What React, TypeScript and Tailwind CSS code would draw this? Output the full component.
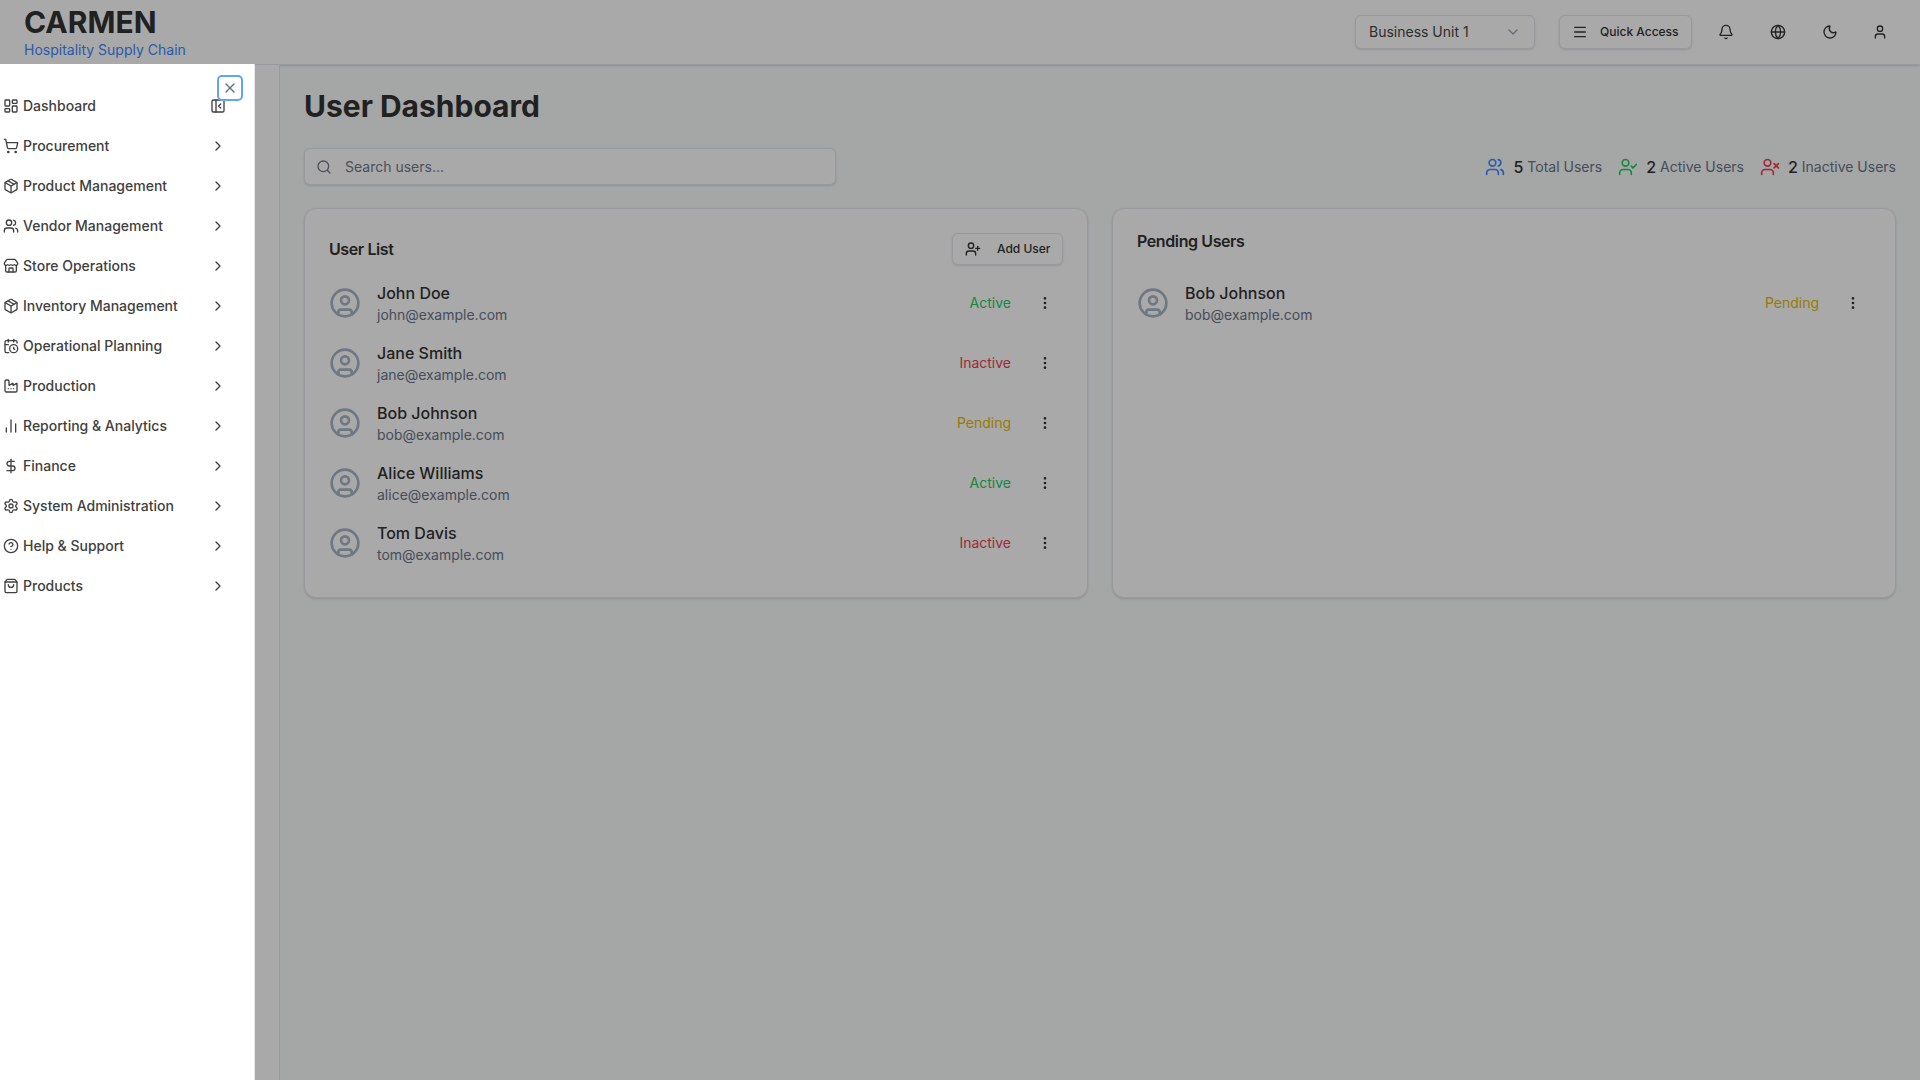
import {
  BarChart2,
  Bell,
  CalendarClock,
  ChevronDown,
  ChevronRight,
  CircleHelp,
  CircleUser,
  DollarSign,
  EllipsisVertical,
  Factory,
  Globe,
  LayoutDashboard,
  Menu,
  Moon,
  Package,
  PanelLeftClose,
  Search,
  Settings,
  ShoppingBag,
  ShoppingCart,
  Store,
  User,
  UserCheck,
  UserPlus,
  UserX,
  Users,
  X,
} from 'lucide-react';

const navItems = [
  { label: 'Dashboard', icon: LayoutDashboard },
  { label: 'Procurement', icon: ShoppingCart },
  { label: 'Product Management', icon: Package },
  { label: 'Vendor Management', icon: Users },
  { label: 'Store Operations', icon: Store },
  { label: 'Inventory Management', icon: Package },
  { label: 'Operational Planning', icon: CalendarClock },
  { label: 'Production', icon: Factory },
  { label: 'Reporting & Analytics', icon: BarChart2 },
  { label: 'Finance', icon: DollarSign },
  { label: 'System Administration', icon: Settings },
  { label: 'Help & Support', icon: CircleHelp },
  { label: 'Products', icon: ShoppingBag },
];

const users = [
  { name: 'John Doe', email: 'john@example.com', status: 'Active' },
  { name: 'Jane Smith', email: 'jane@example.com', status: 'Inactive' },
  { name: 'Bob Johnson', email: 'bob@example.com', status: 'Pending' },
  { name: 'Alice Williams', email: 'alice@example.com', status: 'Active' },
  { name: 'Tom Davis', email: 'tom@example.com', status: 'Inactive' },
];

// colours are lifted so they read right once the backdrop dims them
function statusClass(status: string) {
  if (status === 'Active') return 'text-[#20cc60]';
  if (status === 'Inactive') return 'text-[#f04050]';
  return 'text-[#e8b800]';
}

function UserRow({ name, email, status }: { name: string; email: string; status: string }) {
  return (
    <div className="flex h-[60px] items-center justify-between">
      <div className="flex items-center gap-4">
        <CircleUser className="h-8 w-8 text-[#a8b4c4]" strokeWidth={2} />
        <div>
          <p className="text-base font-medium text-[#333333]">{name}</p>
          <p className="text-sm text-[#6b7488]">{email}</p>
        </div>
      </div>
      <div className="flex items-center gap-4">
        <span className={`text-sm font-normal ${statusClass(status)}`}>{status}</span>
        <button className="flex h-9 w-9 items-center justify-center text-[#333333]">
          <EllipsisVertical className="h-4 w-4" />
        </button>
      </div>
    </div>
  );
}

export default function App() {
  return (
    <div className="relative flex h-screen flex-col overflow-hidden bg-gray-50 font-['Inter',sans-serif] text-[#333333]">
      {/* Top bar */}
      <header className="flex h-[65px] shrink-0 items-center justify-between border-b border-gray-200 bg-white pl-6 pr-[22px] shadow-sm">
        <div>
          <div className="text-[30px] font-bold leading-[36px]">CARMEN</div>
          <div className="text-sm leading-5 text-[#4189ff]">Hospitality Supply Chain</div>
        </div>
        <div className="flex items-center">
          <div className="flex h-[34px] w-[180px] items-center justify-between rounded-md border border-gray-200 bg-white px-[13px] text-sm text-[#454545] shadow-sm">
            Business Unit 1
            <ChevronDown className="h-4 w-4 text-gray-400" />
          </div>
          <button className="ml-6 flex h-[34px] w-[133px] items-center gap-3 rounded-md border border-gray-200 bg-white pl-3 text-xs font-medium shadow-sm">
            <Menu className="h-4 w-4" />
            Quick Access
          </button>
          <div className="ml-4 flex items-center gap-4">
            <button className="flex h-9 w-9 items-center justify-center"><Bell className="h-4 w-4" /></button>
            <button className="flex h-9 w-9 items-center justify-center"><Globe className="h-4 w-4" /></button>
            <button className="flex h-9 w-9 items-center justify-center"><Moon className="h-4 w-4" /></button>
            <button className="-ml-[2px] flex h-9 w-9 items-center justify-center"><User className="h-4 w-4" /></button>
          </div>
        </div>
      </header>

      <div className="flex min-h-0 flex-1">
        {/* Collapsed rail, covered by the sheet */}
        <div className="w-[280px] shrink-0 border-r border-gray-200 bg-white" />

        <main className="min-w-0 flex-1 p-6">
          <h1 className="-mt-[1px] text-3xl font-bold leading-9">User Dashboard</h1>

          <div className="mt-6 flex items-center justify-between">
            <div className="relative w-[532px]">
              <Search className="absolute left-3 top-[11px] h-4 w-4 text-[#717a8a]" />
              <input
                placeholder="Search users..."
                className="h-[37px] w-full rounded-md border border-gray-200 bg-white pl-10 pr-3 text-sm shadow-sm placeholder:text-[#717a8a]"
              />
            </div>
            <div className="flex items-center gap-4">
              <div className="flex items-center gap-2">
                <Users className="h-5 w-5 text-[#4189ff]" />
                <div className="flex items-center gap-1">
                  <span className="text-base font-medium">5</span>
                  <span className="text-sm text-[#6b7488]">Total Users</span>
                </div>
              </div>
              <div className="flex items-center gap-2">
                <UserCheck className="h-5 w-5 text-[#20cc60]" />
                <div className="flex items-center gap-1">
                  <span className="text-base font-medium">2</span>
                  <span className="text-sm text-[#6b7488]">Active Users</span>
                </div>
              </div>
              <div className="flex items-center gap-2">
                <UserX className="h-5 w-5 text-[#f04050]" />
                <div className="flex items-center gap-1">
                  <span className="text-base font-medium">2</span>
                  <span className="text-sm text-[#6b7488]">Inactive Users</span>
                </div>
              </div>
            </div>
          </div>

          <div className="mt-[23px] grid grid-cols-2 gap-6">
            <section className="rounded-xl border border-gray-200 bg-white p-6 shadow">
              <div className="mb-2 flex h-8 items-center justify-between">
                <h2 className="text-base font-semibold leading-none tracking-tight">User List</h2>
                <button className="flex h-8 w-[111px] items-center gap-4 rounded-md border border-gray-200 bg-white pl-3 text-xs font-medium shadow-sm">
                  <UserPlus className="h-4 w-4" />
                  Add User
                </button>
              </div>
              {users.map((u) => (
                <UserRow key={u.email} {...u} />
              ))}
            </section>

            <section className="rounded-xl border border-gray-200 bg-white p-6 shadow">
              <div className="mb-2 h-8">
                <h2 className="text-base font-semibold leading-none tracking-tight">Pending Users</h2>
              </div>
              <UserRow {...users[2]} />
            </section>
          </div>
        </main>
      </div>

      {/* Dimmed backdrop */}
      <div className="fixed inset-0 z-40 bg-black/[0.337]" />

      {/* Open navigation sheet */}
      <aside className="fixed bottom-0 left-0 top-16 z-50 w-[255px] border-r border-gray-200 bg-white">
        <button className="absolute left-[219px] top-[13px] flex h-[22px] w-[22px] items-center justify-center rounded-[3px] outline-2 outline-[#60a5fa] text-gray-500">
          <X className="h-4 w-4" />
        </button>
        <nav className="pt-[22px]">
          {navItems.map(({ label, icon: Icon }, i) => (
            <div key={label} className="flex h-10 items-center justify-between pl-[3px] pr-[28px]">
              <div className="flex items-center gap-[4px] text-sm font-medium text-[#404040]">
                <Icon className="h-4 w-4" />
                {label}
              </div>
              {i === 0 ? (
                <PanelLeftClose className="h-4 w-4 text-[#404040]" />
              ) : (
                <ChevronRight className="h-4 w-4 text-[#404040]" />
              )}
            </div>
          ))}
        </nav>
      </aside>
    </div>
  );
}
